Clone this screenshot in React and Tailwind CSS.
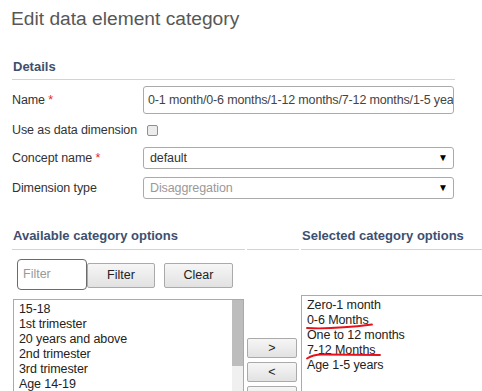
import React from "react";

const F = { fontFamily: '"Liberation Sans", Arial, sans-serif' };

function Label({ children, req }) {
  return (
    <div className="w-[131px] shrink-0 text-[12.5px] tracking-[-0.1px] leading-[15px] text-[#333]">
      {children}
      {req && <span className="text-[#e8262e]"> *</span>}
    </div>
  );
}

function Select({ value, muted }) {
  return (
    <div className="w-[311px] h-[22px] border border-[#aaa] rounded-[3px] bg-white flex items-center pl-[6px] pr-[5px] box-border">
      <span className={"flex-1 text-[12.5px] tracking-[-0.1px] leading-[15px] " + (muted ? "text-[#999]" : "text-[#333]")}>{value}</span>
      <span className="text-[10px] leading-[10px] text-black">▼</span>
    </div>
  );
}

function Btn({ children, className }) {
  return (
    <div className={"flex items-center justify-center border border-[#aaa] rounded-[2px] bg-gradient-to-b from-[#f6f6f6] to-[#e2e2e2] text-[12.5px] text-[#222] box-border " + className}>
      {children}
    </div>
  );
}

export default function App() {
  const left = ["15-18", "1st trimester", "20 years and above", "2nd trimester", "3rd trimester", "Age 14-19", "Age 20-24"];
  const right = ["Zero-1 month", "0-6 Months", "One to 12 months", "7-12 Months", "Age 1-5 years"];
  return (
    <div style={F} className="w-[482px] h-[391px] overflow-hidden bg-white pl-[12px] box-border">
      <div className="pt-[7px] -ml-[1px] text-[19.2px] leading-[24px] text-[#575757]">Edit data element category</div>

      <div className="mt-[28px] w-[443px] h-[21px] border-b border-[#c9d5e1] text-[13px] leading-[16px] font-bold text-[#3d4f6e] pl-[1px]">
        Details
      </div>

      <div className="flex items-center mt-[6px]">
        <Label req>Name</Label>
        <div className="w-[311px] h-[28px] border border-[#aaa] rounded-[3px] flex items-center pl-[4px] text-[12.5px] tracking-[-0.15px] text-[#444] overflow-hidden whitespace-nowrap box-border">
          0-1 month/0-6 months/1-12 months/7-12 months/1-5 years
        </div>
      </div>

      <div className="flex items-center h-[33px]">
        <Label>Use as data dimension</Label>
        <div className="ml-[4px] w-[11px] h-[11px] border border-[#8f8f8f] rounded-[2px] bg-[#ececec] box-border" />
      </div>

      <div className="flex items-center h-[22px]">
        <Label req>Concept name</Label>
        <Select value="default" />
      </div>

      <div className="flex items-center h-[22px] mt-[8px]">
        <Label>Dimension type</Label>
        <Select value="Disaggregation" muted />
      </div>

      <div className="flex gap-[2px] mt-[29px]">
        <div className="w-[233px] shrink-0 h-[22px] border-b border-[#c9d5e1] text-[13px] leading-[16px] font-bold text-[#3d4f6e] pl-[1px]">
          Available category options
        </div>
        <div className="w-[52px] shrink-0 h-[22px] border-b border-[#c9d5e1]" />
        <div className="w-[240px] shrink-0 h-[22px] border-b border-[#c9d5e1] text-[13px] leading-[16px] font-bold text-[#3d4f6e] pl-[1px]">
          Selected category options
        </div>
      </div>

      <div className="flex gap-[2px] items-start">
        <div className="w-[233px] shrink-0">
          <div className="flex items-start mt-[9px] ml-[5px]">
            <div className="w-[70px] h-[31px] border border-[#6b6b6b] rounded-[4px] flex items-center pl-[5px] text-[12.5px] text-[#999] box-border">
              Filter
            </div>
            <Btn className="w-[68px] h-[25px] mt-[4px]">Filter</Btn>
            <Btn className="w-[69px] h-[25px] mt-[4px] ml-[9px]">Clear</Btn>
          </div>
          <div className="mt-[9px] ml-[1px] w-[231px] h-[100px] border border-[#aaa] flex box-border">
            <div className="flex-1 pl-[5px] pt-[2px] text-[12.5px] tracking-[-0.1px] leading-[15px] text-[#222]">
              {left.map((t) => (
                <div key={t}>{t}</div>
              ))}
            </div>
            <div className="w-[11px] flex flex-col">
              <div className="h-[66px] bg-[#bdbdbd]" />
              <div className="flex-1 bg-[#f0f0f0]" />
            </div>
          </div>
        </div>

        <div className="w-[52px] shrink-0 flex flex-col gap-[4px] pt-[88px]">
          <Btn className="w-[50px] h-[20px]">&gt;</Btn>
          <Btn className="w-[50px] h-[20px]">&lt;</Btn>
          <Btn className="w-[50px] h-[20px]">&gt;&gt;</Btn>
        </div>

        <div className="w-[240px] shrink-0 mt-[45px] h-[100px] border border-[#aaa] relative box-border">
          <div className="pl-[5px] pt-[2px] text-[12.5px] tracking-[-0.1px] leading-[15px] text-[#222]">
            {right.map((t) => (
              <div key={t}>{t}</div>
            ))}
          </div>
          <svg className="absolute left-0 top-0" width="120" height="80" viewBox="0 0 120 80" fill="none">
            <path d="M5 32 C 25 33, 50 31, 70 28.5" stroke="#e8101a" strokeWidth="1.8" strokeLinecap="round" />
            <path d="M5 62.5 Q 11 58.5 20 58.5 L 78 59" stroke="#e8101a" strokeWidth="1.8" strokeLinecap="round" />
          </svg>
        </div>
      </div>
    </div>
  );
}
